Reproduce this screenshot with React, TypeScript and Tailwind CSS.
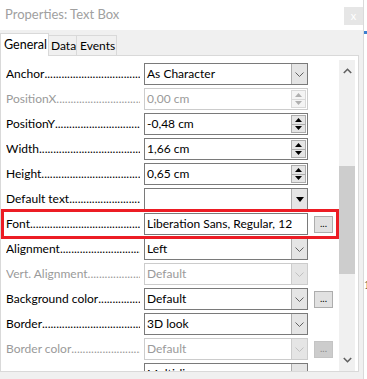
import React from "react";

type Kind = "select" | "spin" | "tri" | "text";
type Row = { label: string; kind: Kind; value: string; disabled?: boolean; button?: "on" | "off" };

const rows: Row[] = [
  { label: "Anchor", kind: "select", value: "As Character" },
  { label: "PositionX", kind: "spin", value: "0,00 cm", disabled: true },
  { label: "PositionY", kind: "spin", value: "-0,48 cm" },
  { label: "Width", kind: "spin", value: "1,66 cm" },
  { label: "Height", kind: "spin", value: "0,65 cm" },
  { label: "Default text", kind: "tri", value: "" },
  { label: "Font", kind: "text", value: "Liberation Sans, Regular, 12", button: "on" },
  { label: "Alignment", kind: "select", value: "Left" },
  { label: "Vert. Alignment", kind: "select", value: "Default", disabled: true },
  { label: "Background color", kind: "select", value: "Default", button: "on" },
  { label: "Border", kind: "select", value: "3D look" },
  { label: "Border color", kind: "select", value: "Default", disabled: true, button: "off" },
  { label: "", kind: "select", value: "Multi-line" },
];

const DOTS = ".".repeat(80);

function Chevron({ color }: { color: string }) {
  return (
    <svg width="9" height="5" viewBox="0 0 9 5">
      <path d="M0.5 0.5 L4.5 4.5 L8.5 0.5" stroke={color} strokeWidth="1" fill="none" />
    </svg>
  );
}

function Control({ r }: { r: Row }) {
  const border = r.disabled ? "border-[#cccccc]" : "border-[#7a7a7a]";
  const text = r.disabled ? "text-[#9a9a9a]" : "text-black";
  return (
    <div className={`w-[164px] h-[22px] border ${border} bg-white flex items-stretch`}>
      <div className={`flex-1 pl-[2px] flex items-center text-[12px] whitespace-nowrap overflow-hidden ${text}`}>
        {r.value}
      </div>
      {r.kind === "select" && (
        <div
          className={`w-[16px] border-l ${r.disabled ? "border-[#cccccc] bg-[#e5e5e5]" : "border-[#adadad] bg-[#e5e5e5]"} flex items-center justify-center`}
        >
          <Chevron color={r.disabled ? "#c0c0c0" : "#606060"} />
        </div>
      )}
      {r.kind === "tri" && (
        <div className="w-[16px] border-l border-[#adadad] bg-[#e5e5e5] flex items-center justify-center">
          <svg width="8" height="5" viewBox="0 0 8 5">
            <path d="M0 0 L8 0 L4 5 Z" fill="#000" />
          </svg>
        </div>
      )}
      {r.kind === "spin" && (
        <div className="w-[16px] py-[1px] pr-[1px] flex flex-col">
          <div
            className={`flex-1 flex flex-col border ${r.disabled ? "border-[#d9d9d9] bg-[#f4f4f4]" : "border-[#adadad] bg-[#e5e5e5]"}`}
          >
            <div className="flex-1 flex items-center justify-center">
              <svg width="7" height="4" viewBox="0 0 7 4">
                <path d="M0 4 L7 4 L3.5 0 Z" fill={r.disabled ? "#b0b0b0" : "#000"} />
              </svg>
            </div>
            <div className={`h-px ${r.disabled ? "bg-[#d9d9d9]" : "bg-[#adadad]"}`} />
            <div className="flex-1 flex items-center justify-center">
              <svg width="7" height="4" viewBox="0 0 7 4">
                <path d="M0 0 L7 0 L3.5 4 Z" fill={r.disabled ? "#b0b0b0" : "#000"} />
              </svg>
            </div>
          </div>
        </div>
      )}
    </div>
  );
}

function RowView({ r }: { r: Row }) {
  const labelColor = r.disabled ? "text-[#9a9a9a]" : "text-black";
  return (
    <div className="h-[22px] flex items-center shrink-0">
      <div className={`w-[134px] flex items-center overflow-hidden whitespace-nowrap text-[12px] ${labelColor}`}>
        <span>{r.label}</span>
        {r.label && <span className="flex-1 overflow-hidden">{DOTS}</span>}
      </div>
      <div className="ml-[4px]">
        <Control r={r} />
      </div>
      {r.button && (
        <div
          className={`ml-[6px] w-[19px] h-[17px] border flex items-center justify-center text-[10px] leading-none pb-[2px] ${
            r.button === "on" ? "bg-[#e1e1e1] border-[#adadad] text-black" : "bg-[#cccccc] border-[#c4c4c4] text-[#888888]"
          }`}
        >
          ...
        </div>
      )}
    </div>
  );
}

export default function App() {
  return (
    <div className="w-[367px] h-[379px] bg-white flex overflow-hidden font-['Lato',sans-serif]">
      <div className="w-[363px] h-[379px] flex flex-col shrink-0">
        {/* title bar */}
        <div className="h-[30px] bg-white flex items-center pl-[5px] relative shrink-0">
          <span className="text-[13px] text-[#a0a0a0] mt-[-1px]">Properties: Text Box</span>
          <div className="ml-auto mr-0 mt-[2px] w-[19px] h-[18px] bg-[#e6e6e6] flex items-center justify-center text-[11px] text-white leading-none pb-[2px]">
            x
          </div>
        </div>
        {/* body */}
        <div className="flex-1 bg-[#f0f0f0] flex flex-col pt-[3px]">
          <div className="h-[22px] flex items-end relative z-10 shrink-0">
            <div className="w-[49px] h-[23px] mb-[-1px] bg-white border border-b-0 border-[#d9d9d9] text-[12.5px] pl-[3px] flex items-center">
              General
            </div>
            <div className="w-[28px] h-[20px] border border-l-0 border-b-0 border-[#d9d9d9] text-[12px] pl-[2px] flex items-center">
              Data
            </div>
            <div className="w-[40px] h-[20px] border border-l-0 border-b-0 border-[#d9d9d9] text-[12px] pl-[3px] flex items-center">
              Events
            </div>
          </div>
          <div className="w-[359px] h-[317px] border border-[#d9d9d9] bg-white flex relative overflow-hidden shrink-0">
            <div className="w-[338px] pl-[5px] pt-[7px] flex flex-col gap-[3px] overflow-hidden">
              {rows.map((r, i) => (
                <RowView key={i} r={r} />
              ))}
            </div>
            <div className="w-[16px] mt-[4px] bg-[#f0f0f0] flex flex-col items-center shrink-0">
              <div className="h-[18px] flex items-center justify-center mt-[2px]">
                <svg width="9" height="6" viewBox="0 0 9 6">
                  <path d="M0.8 5 L4.5 1.3 L8.2 5" stroke="#606060" strokeWidth="1.6" fill="none" />
                </svg>
              </div>
              <div className="h-[86px]" />
              <div className="w-[16px] h-[108px] bg-[#cdcdcd]" />
              <div className="flex-1" />
              <div className="h-[18px] flex items-center justify-center mb-[2px]">
                <svg width="9" height="6" viewBox="0 0 9 6">
                  <path d="M0.8 1 L4.5 4.7 L8.2 1" stroke="#606060" strokeWidth="1.6" fill="none" />
                </svg>
              </div>
            </div>
            {/* red annotation */}
            <div className="absolute left-[0px] top-[153px] w-[338px] h-[30px] border-[3px] border-[#ec1c24] pointer-events-none" />
          </div>
        </div>
      </div>
      {/* window edge and background behind */}
      <div className="w-px h-[379px] bg-[#dadada] shrink-0" />
      <div className="flex-1 h-[379px] flex flex-col bg-white overflow-hidden">
        <div className="h-[31px]" />
        <div className="h-[3px] bg-[#3c7fd0]" />
        <div className="h-[244px]" />
        <div className="text-[13px] leading-[14px] font-['Liberation_Serif',serif] text-black">1</div>
      </div>
    </div>
  );
}
